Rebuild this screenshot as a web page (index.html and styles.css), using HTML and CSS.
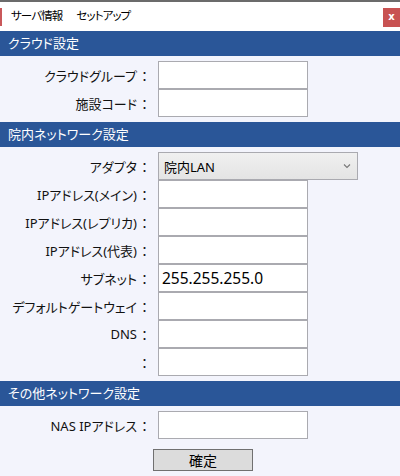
FILE: index.html
```html
<!DOCTYPE html>
<html lang="ja">
<head>
<meta charset="utf-8">
<link rel="stylesheet" href="styles.css">
</head>
<body>
<div class="dialog">
  <div class="titlebar">
    <span class="accent"></span>
    <span class="title"><span class="title-part">サーバ情報</span><span class="title-part">セットアップ</span></span>
    <span class="close">x</span>
  </div>

  <div class="section-head">クラウド設定</div>
  <div class="section-body">
    <div class="row"><label class="lbl"><span class="t">クラウドグループ</span><span class="c">：</span></label><input class="field" type="text" value=""></div>
    <div class="row"><label class="lbl"><span class="t">施設コード</span><span class="c">：</span></label><input class="field" type="text" value=""></div>
  </div>

  <div class="section-head">院内ネットワーク設定</div>
  <div class="section-body">
    <div class="row"><label class="lbl"><span class="t">アダプタ</span><span class="c">：</span></label>
      <div class="select"><span class="sel-text">院内LAN</span>
        <svg class="chev" width="8" height="6" viewBox="0 0 8 6"><path d="M1 1.5 L4 4.5 L7 1.5" fill="none" stroke="#777" stroke-width="1.1"/></svg>
      </div>
    </div>
    <div class="row"><label class="lbl"><span class="t">IPアドレス(メイン)</span><span class="c">：</span></label><input class="field" type="text" value=""></div>
    <div class="row"><label class="lbl"><span class="t">IPアドレス(レプリカ)</span><span class="c">：</span></label><input class="field" type="text" value=""></div>
    <div class="row"><label class="lbl"><span class="t">IPアドレス(代表)</span><span class="c">：</span></label><input class="field" type="text" value=""></div>
    <div class="row"><label class="lbl"><span class="t">サブネット</span><span class="c">：</span></label><input class="field" type="text" value="255.255.255.0"></div>
    <div class="row"><label class="lbl"><span class="t">デフォルトゲートウェイ</span><span class="c">：</span></label><input class="field" type="text" value=""></div>
    <div class="row"><label class="lbl"><span class="t">DNS</span><span class="c">：</span></label><input class="field" type="text" value=""></div>
    <div class="row"><label class="lbl"><span class="t"></span><span class="c">：</span></label><input class="field" type="text" value=""></div>
  </div>

  <div class="section-head">その他ネットワーク設定</div>
  <div class="section-body last">
    <div class="row"><label class="lbl"><span class="t">NAS IPアドレス</span><span class="c">：</span></label><input class="field" type="text" value=""></div>
    <div class="actions"><button class="btn" type="button">確定</button></div>
  </div>
</div>
</body>
</html>
```

FILE: styles.css
```css
* { box-sizing: border-box; }
html, body {
  margin: 0;
  padding: 0;
  background: #f3f4fc;
}
body {
  width: 400px;
  height: 476px;
  overflow: hidden;
  font-family: "Noto Sans", "Noto Sans CJK JP", sans-serif;
  color: #111;
}
.dialog {
  display: flex;
  flex-direction: column;
}
.titlebar {
  height: 31px;
  background: #fff;
  border-top: 2px solid #6b6b6b;
  display: flex;
  align-items: flex-start;
}
.accent {
  width: 2px;
  height: 18px;
  margin-top: 6px;
  background: #c9585a;
}
.title {
  margin-left: 9px;
  margin-top: 5px;
  font-size: 11.5px;
  line-height: 18px;
  font-feature-settings: "palt";
  letter-spacing: -0.9px;
  color: #000;
  display: flex;
  gap: 14px;
}
.close {
  margin-left: auto;
  margin-top: 6px;
  width: 17px;
  height: 19px;
  background: #c85252;
  color: #fff;
  font-family: "DejaVu Sans", sans-serif;
  font-weight: bold;
  font-size: 10px;
  line-height: 18px;
  text-align: center;
}
.section-head {
  height: 25px;
  background: #2a5698;
  color: #fff;
  font-size: 13px;
  line-height: 25px;
  padding-left: 8px;
  font-feature-settings: "palt";
}
.section-body {
  padding: 5px 0;
}
.section-body.last {
  padding-bottom: 0;
}
.row {
  display: flex;
  align-items: center;
  height: 28px;
}
.lbl {
  width: 158px;
  padding-right: 6px;
  display: flex;
  justify-content: flex-end;
  align-items: center;
  font-size: 13px;
  color: #111;
}
.lbl .t {
  font-feature-settings: "palt";
  white-space: nowrap;
}
.lbl .c {
  width: 15px;
  text-align: center;
}
.field {
  width: 150px;
  height: 28px;
  margin: 0;
  border: 1px solid #aaaab0;
  background: #fff;
  font-family: "Noto Sans", "Noto Sans CJK JP", sans-serif;
  font-size: 15.5px;
  color: #000;
  padding: 0 3px;
  outline: none;
  border-radius: 0;
}
.select {
  width: 200px;
  height: 28px;
  border: 1px solid #aaaab0;
  background: linear-gradient(#f0f0f0, #e4e4e4);
  display: flex;
  align-items: center;
  padding: 0 6px 0 5px;
  font-size: 13px;
  color: #000;
}
.sel-text { flex: 1; }
.chev { display: block; }
.actions {
  padding-top: 10px;
  padding-left: 153px;
}
.btn {
  width: 100px;
  height: 22px;
  margin: 0;
  border: 1px solid #707070;
  background: #dcdcdc;
  font-family: "Noto Sans CJK JP", sans-serif;
  font-size: 14px;
  line-height: 18px;
  color: #000;
  padding: 0;
  border-radius: 0;
}
```
